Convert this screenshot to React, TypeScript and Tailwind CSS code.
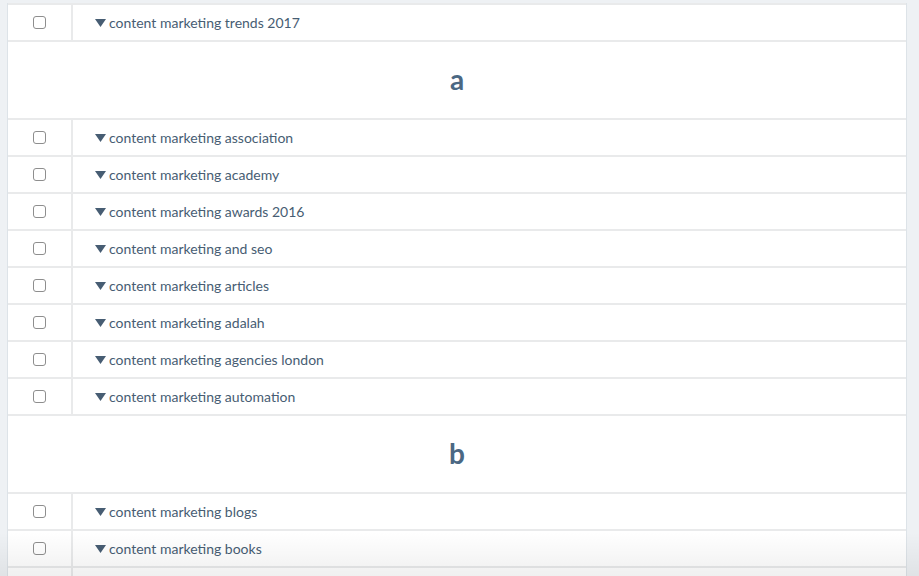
import React from "react";

type Group = { letter?: string; items: string[] };

const groups: Group[] = [
  { items: ["content marketing trends 2017"] },
  {
    letter: "a",
    items: [
      "content marketing association",
      "content marketing academy",
      "content marketing awards 2016",
      "content marketing and seo",
      "content marketing articles",
      "content marketing adalah",
      "content marketing agencies london",
      "content marketing automation",
    ],
  },
  {
    letter: "b",
    items: ["content marketing blogs", "content marketing books", ""],
  },
];

function Row({ label }: { label: string }) {
  return (
    <div className="flex h-[37px] border-b-2 border-[#e9eaeb]">
      <div className="flex w-[63px] shrink-0 items-center justify-center">
        <span className="block h-[13px] w-[13px] rounded-[3px] border border-[#8e8e8e] bg-white" />
      </div>
      <div className="flex flex-1 items-center border-l-2 border-[#e9eaeb] pl-[22px] text-[14px] text-[#475d73]">
        <svg width="11" height="8" viewBox="0 0 11 8" className="mr-[3px] mt-[1px]">
          <path d="M0 0h11L5.5 8z" fill="#475d73" />
        </svg>
        <span>{label}</span>
      </div>
    </div>
  );
}

export default function App() {
  return (
    <div
      className="relative h-[576px] overflow-hidden bg-[#eef1f4] pl-[7px] pr-[12px] pt-[3px]"
      style={{ fontFamily: "Lato, 'Open Sans', sans-serif" }}
    >
      <div className="border-l border-r border-[#dde3e8] bg-white">
        <div className="border-t-2 border-[#e9eaeb]" />
        {groups.map((g, i) => (
          <div key={i}>
            {g.letter && (
              <div className="flex h-[78px] items-center justify-center border-b-2 border-[#e9eaeb] pb-[2px] text-[28px] font-bold text-[#4b6883]">
                {g.letter}
              </div>
            )}
            {g.items.map((label, j) => (
              <Row key={j} label={label} />
            ))}
          </div>
        ))}
      </div>
      <div className="pointer-events-none absolute bottom-0 left-0 right-0 h-[44px] bg-gradient-to-b from-transparent to-black/[0.06]" />
    </div>
  );
}
